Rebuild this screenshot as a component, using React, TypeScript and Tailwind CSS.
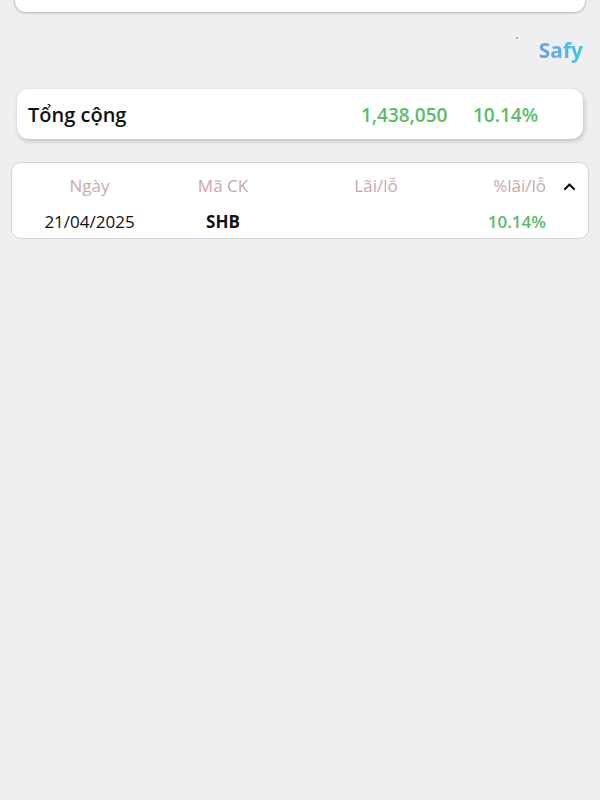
import React from "react";

export default function App() {
  const font = { fontFamily: '"Open Sans", "Noto Sans", sans-serif' };
  return (
    <div className="w-[600px] h-[800px] bg-[#efeff2] overflow-hidden" style={font}>
      <div className="mx-[14px] h-[13px] bg-white border-x border-b border-[#c8c8cc] rounded-b-[12px] shadow-[0_1px_2px_rgba(0,0,0,0.1)]" />
      <div className="relative h-[76px] flex items-center justify-end pr-[17px]">
        <span className="absolute left-[516px] top-[24px] w-[2px] h-[2px] bg-[#9aa0a8] rounded-full" />
        <span className="text-[21px] font-bold bg-gradient-to-r from-[#6a9fe0] to-[#38c6e6] bg-clip-text text-transparent">Safy</span>
      </div>
      <div className="mx-[17px] h-[50px] bg-white rounded-[12px] shadow-[1px_2px_5px_rgba(0,0,0,0.22)] flex items-center pl-[11px] pt-[2px]">
        <span className="text-[20px] font-semibold text-[#111] flex-1">Tổng cộng</span>
        <span className="text-[19px] font-semibold text-[#5cbb68] w-[112px]">1,438,050</span>
        <span className="text-[19px] font-semibold text-[#5cbb68] w-[110px]">10.14%</span>
      </div>
      <div className="mx-[11px] mt-[23px] h-[77px] bg-white rounded-[10px] border border-[#d4d4d8]">
        <div className="flex items-center h-[45px] pt-[1px] text-[17px] text-[#c9a7b1]">
          <div className="w-[155px] text-center">Ngày</div>
          <div className="w-[112px] text-center">Mã CK</div>
          <div className="w-[194px] text-center">Lãi/lỗ</div>
          <div className="w-[73px] text-right">%lãi/lỗ</div>
          <div className="flex-1 flex justify-center pl-[4px]">
            <svg width="13" height="9" viewBox="0 0 13 9" fill="none" stroke="#111" strokeWidth="2.2" strokeLinecap="round" strokeLinejoin="round">
              <path d="M2 7 L6.5 2.5 L11 7" />
            </svg>
          </div>
        </div>
        <div className="flex items-center h-[26px] pt-[2px] text-[17px]">
          <div className="w-[155px] text-center text-[#111]">21/04/2025</div>
          <div className="w-[112px] text-center text-[#111] font-bold">SHB</div>
          <div className="w-[194px] text-center"></div>
          <div className="w-[73px] text-right text-[#5cbb68] font-semibold">10.14%</div>
        </div>
      </div>
    </div>
  );
}
